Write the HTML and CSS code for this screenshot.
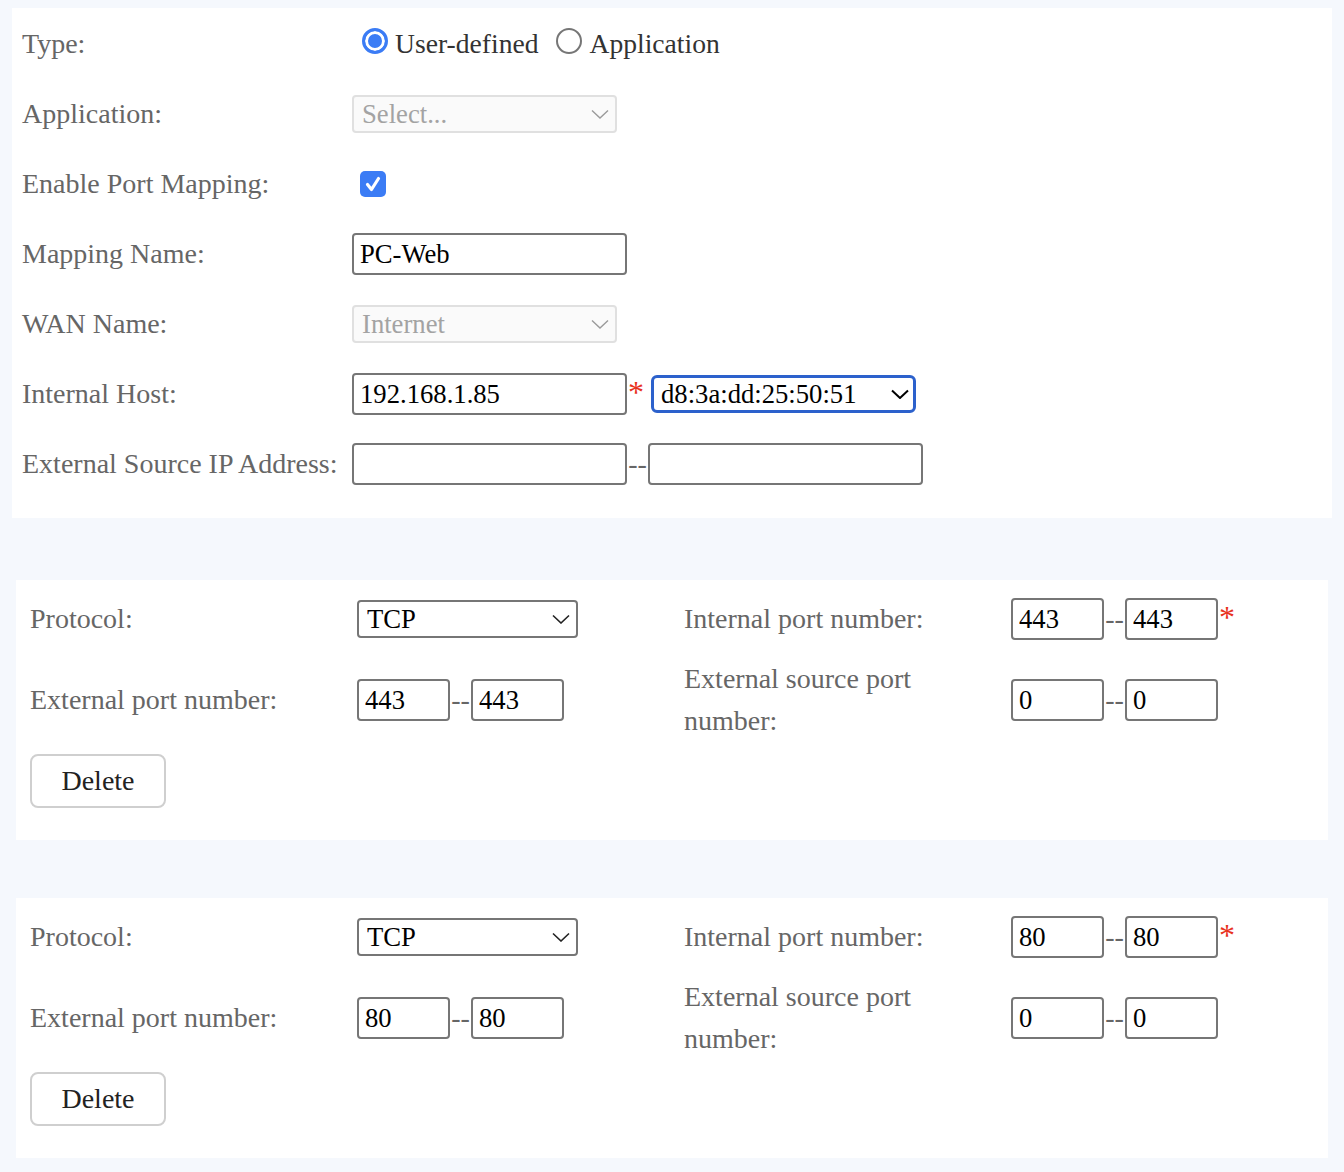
FILE: index.html
```html
<!DOCTYPE html>
<html lang="en">
<head>
<meta charset="utf-8">
<title>Port Mapping</title>
<link rel="stylesheet" href="styles.css">
</head>
<body>
<div class="page">
  <section class="panel main">
    <div class="lbl">Type:</div>
    <div class="ctl">
      <label class="radio"><input type="radio" name="type" class="rd" checked>User-defined</label>
      <label class="radio second"><input type="radio" name="type" class="rd">Application</label>
    </div>

    <div class="lbl">Application:</div>
    <div class="ctl">
      <span class="sel w265 dis"><select disabled><option>Select...</option></select><svg class="chev" width="18" height="10" viewBox="0 0 18 10"><path d="M1 1.5l8 7.5 8-7.5" fill="none" stroke="currentColor" stroke-width="1.4"/></svg></span>
    </div>

    <div class="lbl">Enable Port Mapping:</div>
    <div class="ctl">
      <span class="cbox"><svg width="26" height="26" viewBox="0 0 26 26"><path d="M7.5 13.5l4 5 7-11" fill="none" stroke="#fff" stroke-width="3.2" stroke-linecap="round" stroke-linejoin="round"/></svg></span>
    </div>

    <div class="lbl">Mapping Name:</div>
    <div class="ctl"><input class="txt" type="text" value="PC-Web"></div>

    <div class="lbl">WAN Name:</div>
    <div class="ctl">
      <span class="sel w265 dis"><select disabled><option>Internet</option></select><svg class="chev" width="18" height="10" viewBox="0 0 18 10"><path d="M1 1.5l8 7.5 8-7.5" fill="none" stroke="currentColor" stroke-width="1.4"/></svg></span>
    </div>

    <div class="lbl">Internal Host:</div>
    <div class="ctl">
      <input class="txt" type="text" value="192.168.1.85"><span class="req">*</span>
      <span class="sel w265 focus"><select><option>d8:3a:dd:25:50:51</option></select><svg class="chev" width="18" height="10" viewBox="0 0 18 10"><path d="M1 1.5l8 7.5 8-7.5" fill="none" stroke="currentColor" stroke-width="2"/></svg></span>
    </div>

    <div class="lbl">External Source IP Address:</div>
    <div class="ctl">
      <input class="txt" type="text" value=""><span class="dash">--</span><input class="txt" type="text" value="">
    </div>
  </section>

  <section class="panel rule first">
    <div class="rgrid">
      <div class="lbl">Protocol:</div>
      <div class="ctl">
        <span class="sel w221"><select><option>TCP</option></select><svg class="chev" width="18" height="10" viewBox="0 0 18 10"><path d="M1 1.5l8 7.5 8-7.5" fill="none" stroke="currentColor" stroke-width="1.6"/></svg></span>
      </div>
      <div class="lbl">Internal port number:</div>
      <div class="ctl"><input class="port" type="text" value="443"><span class="dash">--</span><input class="port" type="text" value="443"><span class="req">*</span></div>

      <div class="lbl">External port number:</div>
      <div class="ctl"><input class="port" type="text" value="443"><span class="dash">--</span><input class="port" type="text" value="443"></div>
      <div class="lbl wrap">External source port number:</div>
      <div class="ctl"><input class="port" type="text" value="0"><span class="dash">--</span><input class="port" type="text" value="0"></div>
    </div>
    <button class="del" type="button">Delete</button>
  </section>

  <section class="panel rule second">
    <div class="rgrid">
      <div class="lbl">Protocol:</div>
      <div class="ctl">
        <span class="sel w221"><select><option>TCP</option></select><svg class="chev" width="18" height="10" viewBox="0 0 18 10"><path d="M1 1.5l8 7.5 8-7.5" fill="none" stroke="currentColor" stroke-width="1.6"/></svg></span>
      </div>
      <div class="lbl">Internal port number:</div>
      <div class="ctl"><input class="port" type="text" value="80"><span class="dash">--</span><input class="port" type="text" value="80"><span class="req">*</span></div>

      <div class="lbl">External port number:</div>
      <div class="ctl"><input class="port" type="text" value="80"><span class="dash">--</span><input class="port" type="text" value="80"></div>
      <div class="lbl wrap">External source port number:</div>
      <div class="ctl"><input class="port" type="text" value="0"><span class="dash">--</span><input class="port" type="text" value="0"></div>
    </div>
    <button class="del" type="button">Delete</button>
  </section>
</div>
</body>
</html>
```

FILE: styles.css
```css
html, body {
  margin: 0;
  padding: 0;
  background: #f5f8fd;
}
body {
  font-family: "Liberation Serif", "Times New Roman", serif;
  font-size: 28px;
  color: #666;
}
.page {
  padding: 8px 12px 14px;
}
.panel {
  background: #fff;
  box-sizing: border-box;
}

/* main panel */
.main {
  display: grid;
  grid-template-columns: 330px 1fr;
  grid-auto-rows: 70px;
  align-items: center;
  padding: 1px 10px 19px;
}
.lbl {
  color: #666;
  white-space: nowrap;
}
.ctl {
  display: flex;
  align-items: center;
}

/* radios */
.radio {
  display: flex;
  align-items: center;
  color: #333;
  font-size: 27.6px;
}
.radio.second {
  margin-left: 18px;
}
.rd {
  -webkit-appearance: none;
  appearance: none;
  width: 26px;
  height: 26px;
  margin: 0 7px 7px 10px;
  border-radius: 50%;
  border: 2px solid #767676;
  background: #fff;
  box-sizing: border-box;
}
.radio.second .rd {
  margin-left: 0;
}
.rd:checked {
  border: 3px solid #3b7cf5;
  background: #3b7cf5;
  box-shadow: inset 0 0 0 3px #fff;
}

/* checkbox */
.cbox {
  display: inline-block;
  width: 26px;
  height: 26px;
  margin-left: 8px;
  border-radius: 5px;
  background: #3b7cf5;
}
.cbox svg {
  display: block;
}

/* text inputs */
input.txt, input.port {
  font-family: "Liberation Serif", "Times New Roman", serif;
  font-size: 26.67px;
  color: #000;
  height: 42px;
  box-sizing: border-box;
  border: 2px solid #767676;
  border-radius: 4px;
  padding: 0 6px;
  margin: 0;
  background: #fff;
  outline: none;
}
input.txt {
  width: 275px;
}
input.port {
  width: 93px;
}
.dash {
  width: 21px;
  text-align: center;
  color: #666;
  font-size: 28px;
}
.req {
  color: #e8321e;
  font-size: 32px;
  width: 14px;
  margin-left: 1px;
  margin-top: -4px;
}

/* selects */
.sel {
  position: relative;
  display: inline-block;
}
.sel select {
  -webkit-appearance: none;
  appearance: none;
  display: block;
  width: 100%;
  height: 38px;
  box-sizing: border-box;
  margin: 0;
  padding: 0 30px 0 8px;
  font-family: "Liberation Serif", "Times New Roman", serif;
  font-size: 26.67px;
  color: #000;
  background: #fff;
  border: 2px solid #767676;
  border-radius: 4px;
  outline: none;
  opacity: 1;
}
.sel .chev {
  position: absolute;
  right: 8px;
  top: 50%;
  margin-top: -5px;
  pointer-events: none;
  color: #222;
}
.w265 { width: 265px; }
.w221 { width: 221px; }
.sel.dis select {
  background: #fafafa;
  border-color: #e0e0e0;
  color: #a3a3a3;
}
.sel.dis .chev {
  color: #9a9a9a;
}
.sel.focus {
  margin-left: 9px;
}
.sel.focus select {
  border: 3px solid #2c61cc;
  border-radius: 6px;
  padding-left: 7px;
}
.sel.focus .chev {
  color: #000;
  right: 7px;
}

/* rule panels */
.rule {
  margin: 0 4px;
  padding: 18px 14px 32px;
}
.rule.first {
  margin-top: 62px;
}
.rule.second {
  margin-top: 58px;
}
.rgrid {
  display: grid;
  grid-template-columns: 327px 327px 327px 1fr;
  row-gap: 18px;
  align-items: center;
  line-height: 42px;
}
.rgrid .lbl.wrap {
  white-space: normal;
  max-width: 300px;
}
.del {
  display: block;
  margin-top: 12px;
  width: 136px;
  height: 54px;
  box-sizing: border-box;
  border: 2px solid #cfcfcf;
  border-radius: 8px;
  background: #fff;
  font-family: "Liberation Serif", "Times New Roman", serif;
  font-size: 28px;
  color: #222;
  padding: 0;
}
```
